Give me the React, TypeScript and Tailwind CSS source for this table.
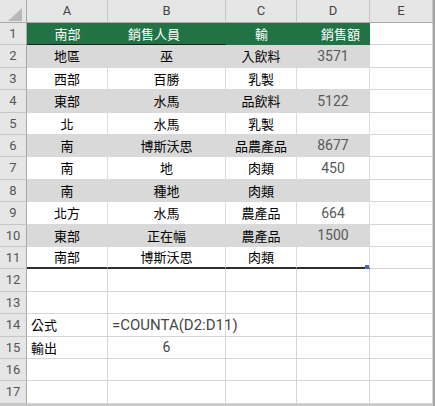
import React from "react";

const CJK = "font-['Noto_Sans_CJK_TC',sans-serif]";
const NUM = "font-['Liberation_Sans_Narrow','Roboto',sans-serif]";

const widthCls = ["w-[27px]", "w-[81px]", "w-[118px]", "w-[71px]", "w-[73px]", "w-[63px]"];
const heights = [22, 23, 22, 23, 22, 22, 23, 22, 23, 22, 22, 23, 22, 23, 22, 22, 23];
const hCls: Record<number, string> = { 22: "h-[22px]", 23: "h-[23px]" };

const data: string[][] = [
  ["南部", "銷售人員", "輸", "銷售額"],
  ["地區", "巫", "入飲料", "3571"],
  ["西部", "百勝", "乳製", ""],
  ["東部", "水馬", "品飲料", "5122"],
  ["北", "水馬", "乳製", ""],
  ["南", "博斯沃思", "品農產品", "8677"],
  ["南", "地", "肉類", "450"],
  ["南", "種地", "肉類", ""],
  ["北方", "水馬", "農產品", "664"],
  ["東部", "正在幅", "農產品", "1500"],
  ["南部", "博斯沃思", "肉類", ""],
];

function Cell({ r, c }: { r: number; c: number }) {
  const w = widthCls[c + 1];
  const h = hCls[heights[r - 1]];
  // table area
  if (r <= 11 && c <= 3) {
    const text = data[r - 1][c];
    const isNum = c === 3 && r > 1;
    if (r === 1) {
      const pad = c === 1 ? "pr-[26px]" : c === 3 ? "pl-[14px]" : "";
      const bottom = c <= 1 ? "border-b border-b-[#1e1e1e]" : "border-b border-b-[#217346]";
      return (
        <div className={`${w} ${h} ${bottom} bg-[#217346] flex items-center justify-center text-white text-[13px] ${CJK} ${pad}`}>
          {text}
        </div>
      );
    }
    const gray = r % 2 === 0;
    const bg = gray ? "bg-[#d9d9d9]" : "bg-white";
    const br = gray ? "border-r border-r-[#d9d9d9]" : "border-r border-r-[#dcdcdc]";
    const bb = r === 11 ? "border-b-2 border-b-[#2e2e2e]" : "border-b border-b-[#d9d9d9]";
    return (
      <div className={`relative ${w} ${h} ${bg} ${br} ${bb} flex items-center justify-center ${isNum ? `${NUM} text-[14px] text-[#595959]` : `${CJK} text-[13px] text-black`}`}>
        {text}
        {r === 11 && c === 3 && (
          <div className="absolute right-0 bottom-[-2px] w-[4px] h-[4px] bg-[#4a6ab8]" />
        )}
      </div>
    );
  }
  const base = `${w} ${h} bg-white border-r border-r-[#d6d6d6] border-b border-b-[#d6d6d6] flex items-center`;
  if (r === 14 && c === 0) return <div className={`${base} pl-[4px] ${CJK} text-[13px] text-black`}>公式</div>;
  if (r === 15 && c === 0) return <div className={`${base} pl-[4px] ${CJK} text-[13px] text-black`}>輸出</div>;
  if (r === 14 && c === 1)
    return (
      <div className={`${base} relative`}>
        <span className={`absolute left-[4px] whitespace-nowrap ${NUM} text-[15px] text-[#474747]`}>=COUNTA(D2:D11)</span>
      </div>
    );
  if (r === 15 && c === 1)
    return <div className={`${base} justify-center ${NUM} text-[14px] text-[#474747]`}>6</div>;
  return <div className={base} />;
}

export default function App() {
  const cols = ["A", "B", "C", "D", "E"];
  return (
    <div className="w-[435px] h-[406px] bg-[#c8c8c8] border-r-2 border-r-[#a3a3a3] overflow-hidden">
      {/* column header row */}
      <div className="flex">
        <div className="w-[27px] h-[23px] bg-[#e6e6e6] border-r border-r-[#a8a8a8] border-b border-b-[#a8a8a8] relative">
          <svg className="absolute left-0 top-0" width="26" height="22" viewBox="0 0 26 22">
            <polygon points="22,8 22,21 8,21" fill="#b8b8b8" />
          </svg>
        </div>
        {cols.map((l, i) => (
          <div
            key={l}
            className={`${widthCls[i + 1]} h-[23px] bg-[#e6e6e6] border-r border-r-[#c6c6c6] border-b border-b-[#a8a8a8] flex items-center justify-center font-['Roboto',sans-serif] text-[13px] text-[#444]`}
          >
            {l}
          </div>
        ))}
      </div>
      {heights.map((_, idx) => {
        const r = idx + 1;
        return (
          <div key={r} className="flex">
            <div
              className={`w-[27px] ${hCls[heights[idx]]} bg-[#e6e6e6] border-r border-r-[#a8a8a8] border-b border-b-[#c6c6c6] flex items-center justify-center font-['Roboto',sans-serif] text-[13px] text-[#555]`}
            >
              {r}
            </div>
            {[0, 1, 2, 3, 4].map((c) => (
              <Cell key={c} r={r} c={c} />
            ))}
          </div>
        );
      })}
    </div>
  );
}
